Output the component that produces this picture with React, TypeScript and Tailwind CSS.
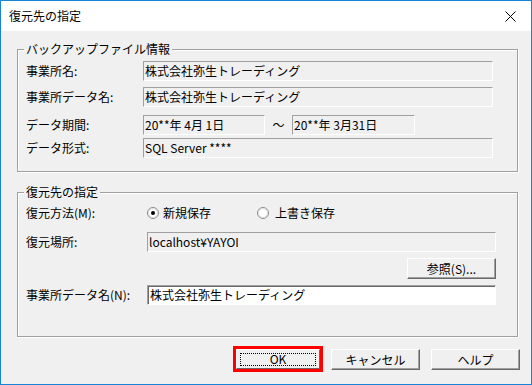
import React from 'react';

const font = { fontFamily: '"Noto Sans CJK JP", "Liberation Sans", sans-serif' };

function Group({ title, className, children }: { title: string; className: string; children: React.ReactNode }) {
  return (
    <div
      className={`relative ml-[16px] w-[501px] border border-[#a0a0a0] shadow-[inset_1px_1px_0_#ffffff,1px_1px_0_#ffffff] ${className}`}
    >
      <div className="absolute left-[6px] -top-[9px] bg-[#f0f0f0] px-[2px] text-[12px] leading-[16px] text-black">
        {title}
      </div>
      {children}
    </div>
  );
}

function ReadField({ value, className }: { value: string; className: string }) {
  return (
    <div
      className={`h-[20px] border-t border-l border-[#a0a0a0] border-b-white border-r-white border-b border-r bg-[#f0f0f0] pl-[1px] text-[12px] leading-[18px] text-black whitespace-nowrap overflow-hidden ${className}`}
    >
      {value}
    </div>
  );
}

function Label({ text, w }: { text: string; w: string }) {
  return <div className={`${w} shrink-0 text-[12px] leading-[20px] text-black whitespace-nowrap`}>{text}</div>;
}

function Btn({ label, className }: { label: string; className?: string }) {
  return (
    <div
      className={`h-[21px] w-[89px] flex items-center justify-center border-t border-l border-white border-b border-r border-b-[#696969] border-r-[#696969] shadow-[inset_-1px_-1px_0_#a0a0a0] bg-[#f0f0f0] text-[12px] text-black ${className ?? ''}`}
    >
      {label}
    </div>
  );
}

function Radio({ checked }: { checked: boolean }) {
  return (
    <svg width="12" height="12" viewBox="0 0 12 12" className="shrink-0">
      <circle cx="6" cy="6" r="5.5" fill="#ffffff" stroke="#8a8a8a" />
      <circle cx="6" cy="6" r="4.5" fill="none" stroke="#dcdcdc" />
      {checked && <circle cx="6" cy="6" r="2" fill="#000000" />}
    </svg>
  );
}

export default function App() {
  return (
    <div
      style={font}
      className="w-[532px] h-[385px] border border-[#1883d7] bg-[#f0f0f0] flex flex-col overflow-hidden"
    >
      {/* title bar */}
      <div className="h-[30px] bg-white flex items-center justify-between pl-[8px] pr-[15px]">
        <span className="text-[12px] text-black">復元先の指定</span>
        <svg width="11" height="11" viewBox="0 0 11 11">
          <path d="M0.5 0.5 L10.5 10.5 M10.5 0.5 L0.5 10.5" stroke="#000" strokeWidth="1" />
        </svg>
      </div>

      {/* backup info */}
      <Group title="バックアップファイル情報" className="mt-[18px] h-[123px] pl-[8px] pt-[11px]">
        <div className="flex items-center">
          <Label text="事業所名:" w="w-[117px]" />
          <ReadField value="株式会社弥生トレーディング" className="w-[350px]" />
        </div>
        <div className="flex items-center mt-[6px]">
          <Label text="事業所データ名:" w="w-[117px]" />
          <ReadField value="株式会社弥生トレーディング" className="w-[350px]" />
        </div>
        <div className="flex items-center mt-[8px]">
          <Label text="データ期間:" w="w-[117px]" />
          <ReadField value="20**年 4月 1日" className="w-[122px]" />
          <span className="w-[27px] text-center text-[12px] text-black">～</span>
          <ReadField value="20**年 3月31日" className="w-[123px]" />
        </div>
        <div className="flex items-center mt-[3px]">
          <Label text="データ形式:" w="w-[117px]" />
          <ReadField value="SQL Server ****" className="w-[350px]" />
        </div>
      </Group>

      {/* restore target */}
      <Group title="復元先の指定" className="mt-[20px] h-[145px] pl-[8px] pt-[10px]">
        <div className="flex items-center h-[20px]">
          <Label text="復元方法(M):" w="w-[121px]" />
          <Radio checked />
          <span className="ml-[4px] w-[94px] text-[12px] text-black">新規保存</span>
          <Radio checked={false} />
          <span className="ml-[6px] text-[12px] text-black">上書き保存</span>
        </div>
        <div className="flex items-center mt-[9px]">
          <Label text="復元場所:" w="w-[121px]" />
          <ReadField value="localhost¥YAYOI" className="w-[349px]" />
        </div>
        <div className="flex mt-[6px] ml-[381px]">
          <Btn label="参照(S)..." />
        </div>
        <div className="flex items-center mt-[6px]">
          <Label text="事業所データ名(N):" w="w-[121px]" />
          <div className="h-[20px] w-[349px] border-t border-l border-[#a0a0a0] border-b border-r border-b-white border-r-white shadow-[inset_1px_1px_0_#696969] bg-white pl-[2px] text-[12px] leading-[18px] text-black whitespace-nowrap">
            株式会社弥生トレーディング
          </div>
        </div>
      </Group>

      {/* buttons */}
      <div className="flex items-start mt-[9px] pl-[232px]">
        <div className="w-[90px] h-[26px] border-[3px] border-[#ff0000] flex">
          <div className="flex-1 flex items-center justify-center border-t border-l border-white border-b border-r border-b-[#696969] border-r-[#696969] bg-[#f0f0f0] text-[12px] text-black">
            <div className="w-[76px] h-[13px] flex items-center justify-center border border-dotted border-black">OK</div>
          </div>
        </div>
        <Btn label="キャンセル" className="ml-[8px] mt-[3px]" />
        <Btn label="ヘルプ" className="ml-[11px] mt-[3px]" />
      </div>
    </div>
  );
}
